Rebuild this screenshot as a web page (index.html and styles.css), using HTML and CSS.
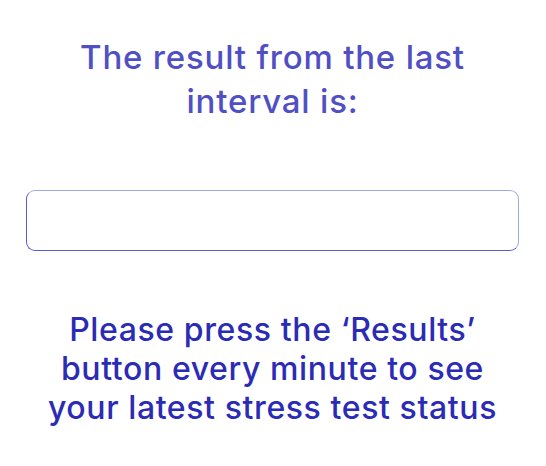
FILE: index.html
```html
<!DOCTYPE html>
<html lang="en">
<head>
<meta charset="utf-8">
<title>Stress test result</title>
<link rel="stylesheet" href="styles.css">
</head>
<body>
<main class="screen">
  <h1 class="heading">The result from the last<br>interval is:</h1>
  <div class="result-box"></div>
  <p class="note">Please press the ‘Results’<br>button every minute to see<br>your latest stress test status</p>
</main>
</body>
</html>
```
FILE: styles.css
```css
html, body {
  margin: 0;
  padding: 0;
  background: #ffffff;
}
.screen {
  width: 546px;
  height: 466px;
  box-sizing: border-box;
  display: flex;
  flex-direction: column;
  align-items: center;
  padding: 35px 27px 0 26px;
  font-family: "Inter", "Liberation Sans", Arial, sans-serif;
}
.heading {
  margin: 0;
  text-align: center;
  white-space: nowrap;
  font-size: 33px;
  line-height: 44px;
  letter-spacing: 0.8px;
  font-weight: 500;
  color: #5050c4;
}
.result-box {
  align-self: stretch;
  margin-top: 67px;
  height: 61px;
  box-sizing: border-box;
  border: 1px solid #5a5ad8;
  border-top-color: #a6a6ea;
  border-right-color: #a6a6ea;
  border-radius: 9px;
}
.note {
  margin: 59px 0 0;
  text-align: center;
  white-space: nowrap;
  font-size: 32px;
  line-height: 39px;
  letter-spacing: 0.6px;
  font-weight: 500;
  color: #2b2bb5;
}
```
